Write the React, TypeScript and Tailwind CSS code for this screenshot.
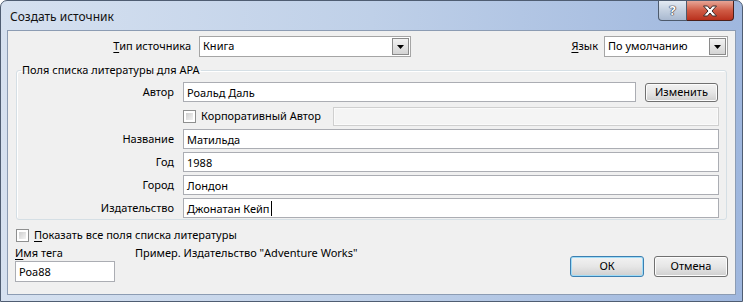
import React from "react";

const ui = "font-['Segoe_UI','Noto_Sans',sans-serif] text-[11px] text-black";

function TextBox({ value, className = "", caret = false }: { value?: string; className?: string; caret?: boolean }) {
  return (
    <div className={`h-[20px] bg-white border border-[#abadb3] flex items-center pl-[3px] leading-none ${className}`}>
      <span>{value}</span>
      {caret && <span className="inline-block w-px h-[15px] bg-black ml-px" />}
    </div>
  );
}

function Combo({ value, className = "" }: { value: string; className?: string }) {
  return (
    <div className={`h-[21px] bg-white border border-[#a5a5a5] flex items-center pl-[3px] pr-[1px] ${className}`}>
      <span className="flex-1">{value}</span>
      <div className="w-[17px] h-[17px] border border-[#8a8a8a] bg-gradient-to-b from-[#f2f2f2] to-[#d4d4d4] flex items-center justify-center">
        <svg width="7" height="4" viewBox="0 0 7 4">
          <path d="M0 0h7L3.5 4z" fill="#000" />
        </svg>
      </div>
    </div>
  );
}

function Check({ label }: { label: React.ReactNode }) {
  return (
    <div className="flex items-center gap-[5px]">
      <div className="w-[13px] h-[13px] border border-[#8e8f8f] bg-white p-[2px]">
        <div className="w-full h-full bg-gradient-to-br from-[#cfcfcf] to-[#f4f4f4]" />
      </div>
      <span>{label}</span>
    </div>
  );
}

function Btn({ children, primary = false, className = "" }: { children: React.ReactNode; primary?: boolean; className?: string }) {
  return (
    <button
      className={`rounded-[3px] border flex items-center justify-center bg-gradient-to-b from-[#f2f2f2] via-[#e6e6e6] to-[#cfcfcf] ${
        primary ? "border-[#3c7fb1] shadow-[inset_0_0_0_1px_#9fdcf7]" : "border-[#707070] shadow-[inset_0_0_0_1px_#fcfcfc]"
      } ${className}`}
    >
      {children}
    </button>
  );
}

function Row({ label, children, className = "" }: { label: React.ReactNode; children: React.ReactNode; className?: string }) {
  return (
    <div className={`flex items-center pr-[7px] ${className}`}>
      <div className="w-[158px] text-right pr-px shrink-0">{label}</div>
      <div className="flex-1 ml-[8px] flex items-center">{children}</div>
    </div>
  );
}

export default function App() {
  return (
    <div className="w-[743px] h-[302px] bg-white">
      <div className={`w-[743px] h-[302px] rounded-t-[7px] border border-[#4f5d72] bg-gradient-to-r from-[#d6e1f0] via-[#bfd0e8] to-[#9fb7de] flex flex-col ${ui}`}>
        {/* title bar */}
        <div className="h-[29px] flex items-start">
          <div className="pl-[9px] pt-[7px] text-[12px] text-[#111]">Создать источник</div>
          <div className="ml-auto mr-[8px] flex">
            <div className="w-[29px] h-[20px] border border-[#4d5a6c] border-t-0 rounded-bl-[4px] bg-gradient-to-b from-[#e3eaf3] via-[#c4d0e0] to-[#a9b9d0] flex items-center justify-center">
              <span className="font-bold text-[13px] text-white [text-shadow:0_0_1px_#223,0_0_1px_#223,0_0_1px_#223]">?</span>
            </div>
            <div className="w-[47px] h-[20px] border border-[#4a1f1a] border-t-0 border-l-0 rounded-br-[4px] bg-gradient-to-b from-[#e6a596] via-[#cf5a44] to-[#b9301c] flex items-center justify-center">
              <svg width="16" height="12" viewBox="0 0 16 12">
                <path
                  d="M1.5 1h4l2.5 3 2.5-3h4L10 6l4.5 5h-4L8 8l-2.5 3h-4L6 6z"
                  fill="#fff"
                  stroke="#3a2a2a"
                  strokeWidth="1"
                  strokeLinejoin="round"
                />
              </svg>
            </div>
          </div>
        </div>

        {/* client area */}
        <div className="mx-[6px] h-[265px] border border-[#8c9cb3] bg-[#f0f0f0] px-[7px] flex flex-col">
          <div className="flex items-center pt-[5px]">
            <div className="w-[176px] text-right">
              <span className="underline underline-offset-2">Т</span>ип источника
            </div>
            <Combo value="Книга" className="ml-[8px] w-[212px]" />
            <div className="ml-auto mr-[6px]">
              <span className="underline underline-offset-2">Я</span>зык
            </div>
            <Combo value="По умолчанию" className="w-[124px]" />
          </div>

          <fieldset className="mt-[5px] ml-px mr-[1px] border border-[#d5dfe5] rounded-[3px] shadow-[inset_1px_1px_0_#fff] pt-[4px] pb-px flex flex-col gap-[3px]">
            <legend className="ml-[4px] px-px leading-[16px]">Поля списка литературы для APA</legend>
            <Row label="Автор" className="pr-[8px]">
              <TextBox value="Роальд Даль" className="flex-1" />
              <Btn className="ml-[9px] w-[73px] h-[19px]">Изменить</Btn>
            </Row>
            <div className="flex items-center pr-[7px] h-[20px] mt-px">
              <div className="w-[158px] shrink-0" />
              <div className="ml-[8px]">
                <Check label="Корпоративный Автор" />
              </div>
              <div className="ml-[12px] flex-1 h-[19px] border border-[#cfcfcf] bg-[#f4f4f4] shadow-[inset_0_0_0_1px_#fafafa]" />
            </div>
            <Row label="Название">
              <TextBox value="Матильда" className="flex-1" />
            </Row>
            <Row label="Год">
              <TextBox value="1988" className="flex-1" />
            </Row>
            <Row label="Город">
              <TextBox value="Лондон" className="flex-1" />
            </Row>
            <Row label="Издательство">
              <TextBox value="Джонатан Кейп" caret className="flex-1" />
            </Row>
          </fieldset>

          <div className="mt-[7px] ml-px h-[16px] flex items-center">
            <Check
              label={
                <>
                  <span className="underline underline-offset-2">П</span>оказать все поля списка литературы
                </>
              }
            />
          </div>

          <div className="flex mt-[2px]">
            <div className="w-[100px] flex flex-col">
              <div className="leading-[16px]">
                <span className="underline underline-offset-2">И</span>мя тега
              </div>
              <TextBox value="Роа88" className="h-[21px]" />
            </div>
            <div className="ml-[20px] leading-[16px]">Пример. Издательство "Adventure Works"</div>
            <div className="ml-auto flex gap-[10px] mt-[11px]">
              <Btn primary className="w-[74px] h-[21px]">
                ОК
              </Btn>
              <Btn className="w-[74px] h-[21px]">Отмена</Btn>
            </div>
          </div>
        </div>
      </div>
    </div>
  );
}
